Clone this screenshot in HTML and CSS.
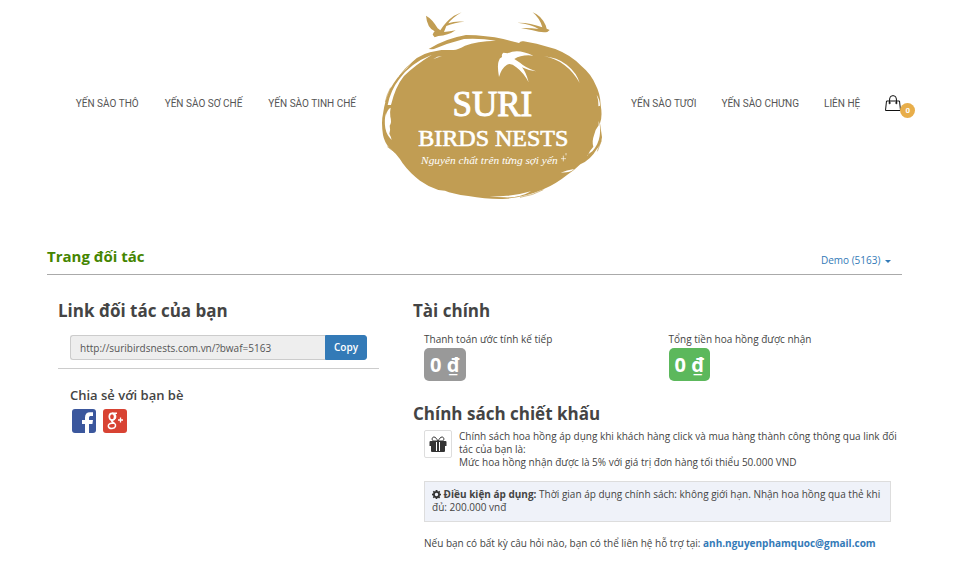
FILE: index.html
```html
<!DOCTYPE html>
<html lang="vi">
<head>
    <meta charset="UTF-8">
    <meta name="viewport" content="width=device-width, initial-scale=1.0">
    <title>Trang đối tác - Suri Birds Nests</title>
    <link rel="stylesheet" href="styles.css">
</head>
<body>
    <header class="header">
        <nav class="nav nav-left">
            <a href="#">YẾN SÀO THÔ</a>
            <a href="#">YẾN SÀO SƠ CHẾ</a>
            <a href="#">YẾN SÀO TINH CHẾ</a>
        </nav>

        <a href="#" class="logo" aria-label="Suri Birds Nests">
            <svg viewBox="0 0 735 615" aria-hidden="true">
                <!-- nest -->
                <path class="gold" d="M176 147Q225 116 288 105Q350 106 400 117L447 129Q451 122 461 124L500 131L556 147Q605 166 635 199Q663 222 677 255Q691 281 692 315Q698 350 690 370L696 412Q694 432 680 448Q662 480 631 493Q613 511 592 524Q560 550 520 568Q460 594 398 597Q350 598 295 588Q245 581 225 572L205 570Q175 560 150 542Q120 520 98 490Q80 460 58 444Q43 426 39 405Q33 365 39 341Q45 300 60 268Q80 230 112 203Q140 166 180 157L214 150Z"/>
                <!-- brush gaps -->
                <path class="white" d="M184 150Q230 130 282 117Q330 114 378 122Q320 123 285 137Q265 149 250 150L214 150Z"/>
                <path class="white" d="M53 315Q62 270 88 237Q120 190 186 164Q135 195 102 228Q76 260 63 315Z"/>
                <path class="white" d="M48 340Q42 360 46 385Q50 406 65 420Q64 412 58 401Q62 388 59 377Q66 366 61 350Q59 336 62 323Q52 328 48 345Z"/>
                <path class="white" d="M189 178Q202 168 216 168Q203 172 189 178ZM522 169Q560 172 590 194Q621 219 629 249Q610 215 583 195Q557 175 522 169Z"/>
                <path class="white" d="M686 363Q693 380 689 408Q685 434 667 454Q650 465 652 469Q660 450 670 440Q665 425 672 406Q674 391 686 376ZM572 518Q590 510 612 507Q608 514 590 517Z"/>
                <path class="white" d="M358 590Q430 590 483 574Q450 594 404 592ZM680 284Q690 299 690 317L685 319Q686 300 680 284Z"/>
                <path class="gold-line" d="M88 228Q105 202 132 184M46 306Q50 284 62 263M52 440L75 457M450 592Q490 586 520 569M682 454L694 422"/>
                <!-- swallows -->
                <path class="gold" d="M168 47Q187 57 203 85L211 91Q226 65 252 47L275 37Q246 54 235 70Q254 62 284 65Q253 67 229 78L222 96Q240 95 257 91Q234 107 205 108L194 112L188 104Q190 98 194 94Q171 83 168 47Z"/>
                <path class="gold" d="M488 37Q513 46 527 76L530 86L539 90L532 96Q515 99 488 91L453 84Q480 83 506 87Q487 73 442 68Q480 67 517 82Q509 54 488 37Z"/>
                <path class="white" d="M387 231Q381 195 386 184Q388 174 396 171Q394 162 400 158L413 160Q443 144 490 167Q455 163 433 177L450 188Q465 202 498 214Q473 211 456 202Q468 216 476 247Q461 218 438 201Q423 188 411 194Q394 205 387 231Z"/>
                <text class="logo-text suri" x="367" y="347">SURI</text>
                <text class="logo-text birds" x="370" y="437">BIRDS NESTS</text>
                <text class="logo-text slogan" x="358" y="492">Nguyên chất trên từng sợi yến</text>
                <path class="sparkle" d="M580 467v17M573 476h15M588 459v7"/>
            </svg>
        </a>

        <nav class="nav nav-right">
            <a href="#">YẾN SÀO TƯƠI</a>
            <a href="#">YẾN SÀO CHƯNG</a>
            <a href="#">LIÊN HỆ</a>
            <a href="#" class="cart" aria-label="Giỏ hàng">
                <svg viewBox="0 0 16 17" aria-hidden="true">
                    <path d="M1.500 6h13l1 9.500H.5zM4.600 8.500V4a3.400 3.400 0 0 1 6.800 0v4.500"/>
                    <circle cx="4.600" cy="8" r=".7"/>
                    <circle cx="11.400" cy="8" r=".7"/>
                </svg>
                <span class="cart-count">0</span>
            </a>
        </nav>
    </header>

    <main class="container">
        <div class="page-head">
            <h1>Trang đối tác</h1>
            <a href="#" class="account">Demo (5163) <span class="caret"></span></a>
        </div>

        <div class="columns">
            <section>
                <h2>Link đối tác của bạn</h2>
                <div class="link-group">
                    <input type="text" id="link" aria-label="Link đối tác của bạn" value="http://suribirdsnests.com.vn/?bwaf=5163" readonly>
                    <button type="button" onclick="copyLink()">Copy</button>
                </div>
                <div class="share">
                    <h3>Chia sẻ với bạn bè</h3>
                    <div class="share-links">
                        <a href="#" aria-label="Facebook">
                            <svg viewBox="0 0 24 24" aria-hidden="true">
                                <rect width="24" height="24" rx="3" fill="#3b579d"/>
                                <path fill="#fff" d="M13 24v-9h-3v-4h3V8.500c0-3.400 1.900-5.200 5-5.200h3v3.800h-2c-1.400 0-2 .6-2 1.900v2h4l-.6 4H17v9z"/>
                            </svg>
                        </a>
                        <a href="#" aria-label="Google+">
                            <svg viewBox="0 0 24 24" aria-hidden="true">
                                <rect width="24" height="24" rx="3" fill="#d84333"/>
                                <g fill="none" stroke="#fff">
                                    <ellipse cx="9" cy="7.800" rx="2.700" ry="3.400" stroke-width="1.700"/>
                                    <path stroke-width="1.500" d="M9 4.300h5M9.500 11c-2 1 .2 2 1.900 3.300 2 1.700 1.500 5-2.400 5.200-4.600.2-5.100-4.900-.2-5.200h2M11.500 5c1.700 1.700 1.500 4-.5 5.500"/>
                                    <path stroke-width="1.300" d="M17.500 8.500v5M15 11h5"/>
                                </g>
                            </svg>
                        </a>
                    </div>
                </div>
            </section>

            <section>
                <h2>Tài chính</h2>
                <div class="finance">
                    <div>
                        <p>Thanh toán ước tính kế tiếp</p>
                        <span class="badge">0 ₫</span>
                    </div>
                    <div>
                        <p>Tổng tiền hoa hồng được nhận</p>
                        <span class="badge badge-green">0 ₫</span>
                    </div>
                </div>

                <h2>Chính sách chiết khấu</h2>
                <div class="policy">
                    <div class="media">
                        <span class="gift">
                            <svg viewBox="0 0 18 18" aria-hidden="true">
                                <path d="M1.500 6h15q1 0 1 1v4H.5V7q0-1 1-1zM2 10h14v6q0 1-1 1H3q-1 0-1-1z"/>
                                <path class="gift-hole" d="M7 7h1v9H7zM10 7h1v9h-1z"/>
                                <path class="gift-bow" d="M9 6C7.600 3.800 6.600 2 5 2 2.500 2 2.500 6 5 6zM9 6c1.400-2.200 2.400-4 4-4 2.500 0 2.500 4 0 4z"/>
                            </svg>
                        </span>
                        <p>Chính sách hoa hồng áp dụng khi khách hàng click và mua hàng thành công thông qua link đối tác của bạn là:<br>Mức hoa hồng nhận được là 5% với giá trị đơn hàng tối thiểu 50.000 VND</p>
                    </div>
                    <div class="condition">
                        <svg class="gear" viewBox="0 0 16 16" aria-hidden="true">
                            <path fill-rule="evenodd" d="M6.500 0h3l.5 2.200 1.200.5L13.100 1.500l1.500 1.900-1.100 1.500.6 1.600 1.900.3v2.700l-2 .4-.6 1.400 1.200 1.700-2 2-1.700-1.200-1.300.5L9.300 16H6.700l-.4-1.900-1.500-.6L3.300 14.600l-1.900-1.800L2.500 11.200 2 9.800 0 9.400V6.700l2-.4.6-1.300-1.200-1.800 2-1.900 1.700 1.200L6.200 2zM8 5a3 3 0 1 0 0 6 3 3 0 0 0 0-6z"/>
                        </svg>
                        <strong>Điều kiện áp dụng:</strong> Thời gian áp dụng chính sách: không giới hạn. Nhận hoa hồng qua thẻ khi đủ: 200.000 vnđ
                    </div>
                    <p>Nếu bạn có bất kỳ câu hỏi nào, bạn có thể liên hệ hỗ trợ tại: <a href="mailto:anh.nguyenphamquoc@gmail.com">anh.nguyenphamquoc@gmail.com</a></p>
                </div>
            </section>
        </div>
    </main>

<script>
const copyLink = () => {
    const link = document.getElementById('link');
    link.select();
    document.execCommand('copy');
};
</script>
</body>
</html>
```
FILE: styles.css
```css
* {
    box-sizing: border-box;
    margin: 0;
    padding: 0;
}

body {
    background: #fff;
    color: #444;
    font-family: 'Open Sans', 'Noto Sans', sans-serif;
    font-size: 10px;
    line-height: 13px;
}

a {
    color: #337ab7;
    text-decoration: none;
}

svg {
    display: block;
}

/* header */
.header {
    display: grid;
    grid-template-columns: 1fr 245px 1fr;
    align-items: center;
    padding: 0 39px 0 67px;
}

.nav {
    display: flex;
    align-items: center;
    gap: 26px;
    padding-top: 2px;
    font-family: Roboto, sans-serif;
    white-space: nowrap;
}

.nav a {
    color: #555;
}

.nav-left {
    justify-content: flex-end;
    padding-right: 14px;
}

.nav-right {
    gap: 25px;
    padding-left: 16px;
}

.logo svg {
    width: 100%;
}

.gold {
    fill: #c19d53;
}

.white {
    fill: #fff;
}

.gold-line {
    fill: none;
    stroke: #c19d53;
    stroke-width: 2;
}

.logo-text {
    fill: #fff;
    stroke: #fff;
    font-family: 'Liberation Serif', serif;
    text-anchor: middle;
}

.suri {
    font-size: 105px;
    stroke-width: 3;
}

.birds {
    font-size: 72px;
    stroke-width: 2;
}

.slogan {
    font-size: 34px;
    font-style: italic;
    stroke: none;
}

.sparkle {
    stroke: #fff;
    stroke-width: 2;
}

.cart {
    position: relative;
}

.cart svg {
    width: 16px;
    height: 17px;
    fill: none;
    stroke: #111;
}

.nav .cart-count {
    position: absolute;
    left: 15px;
    top: 8px;
    width: 15px;
    height: 15px;
    border-radius: 50%;
    background: #e8ae4a;
    color: #fff;
    font-size: 8px;
    font-weight: bold;
    line-height: 15px;
    text-align: center;
}

/* content */
.container {
    padding: 40px 55px 20px 47px;
}

.page-head {
    display: flex;
    justify-content: space-between;
    align-items: flex-end;
    padding: 0 11px 7px 0;
    border-bottom: 1px solid #aaa;
}

h1 {
    color: #458500;
    font-size: 15px;
    line-height: 22px;
}

.caret {
    display: inline-block;
    margin-left: 2px;
    border: 3px solid transparent;
    border-top-color: #337ab7;
    border-bottom: 0;
    vertical-align: middle;
}

.columns {
    display: grid;
    grid-template-columns: 321fr 478fr;
    gap: 34px;
    padding: 24px 11px 0;
}

h2 {
    font-size: 17px;
    line-height: 24px;
}

.link-group {
    display: flex;
    padding: 12px 12px 8px;
    border-bottom: 1px solid #ccc;
}

.link-group input {
    flex: 1;
    min-width: 0;
    height: 25px;
    padding: 0 9px;
    border: 1px solid #ccc;
    border-right: 0;
    border-radius: 3px 0 0 3px;
    background: #eee;
    color: #555;
    font: inherit;
}

.link-group button {
    width: 42px;
    border: 1px solid #337ab7;
    border-radius: 0 3px 3px 0;
    background: #337ab7;
    color: #fff;
    font: inherit;
    font-weight: 600;
    cursor: pointer;
}

.share {
    padding: 17px 12px 0;
}

h3 {
    font-size: 13px;
    line-height: 18px;
    font-weight: 600;
}

.share-links {
    display: flex;
    gap: 7px;
    padding: 5px 2px;
}

.share-links svg {
    width: 24px;
    height: 24px;
}

.finance {
    display: grid;
    grid-template-columns: 1fr 1fr;
    gap: 22px;
    padding: 10px 0 21px 11px;
}

.badge {
    display: inline-block;
    margin-top: 2px;
    padding: 0 6px;
    border-radius: 5px;
    background: #999;
    color: #fff;
    font-size: 20px;
    line-height: 33px;
    font-weight: bold;
}

.badge-green {
    background: #5cb85c;
}

.policy {
    padding: 4px 0 0 11px;
}

.media {
    display: flex;
    align-items: flex-start;
    gap: 7px;
    margin-right: -12px;
}

.gift {
    flex: none;
    padding: 4px;
    border: 1px solid #ddd;
    border-radius: 2px;
}

.gift svg {
    width: 18px;
    height: 18px;
    fill: #333;
}

.gift .gift-hole {
    fill: #fff;
}

.gift .gift-bow {
    fill: none;
    stroke: #333;
}

.condition {
    margin: 12px 0 15px;
    padding: 6px 7px 7px;
    border: 1px solid #ddd;
    background: #eff2f9;
}

.gear {
    display: inline-block;
    width: 9px;
    height: 9px;
    fill: #333;
    vertical-align: -1px;
}

.policy a {
    font-weight: bold;
}
```
